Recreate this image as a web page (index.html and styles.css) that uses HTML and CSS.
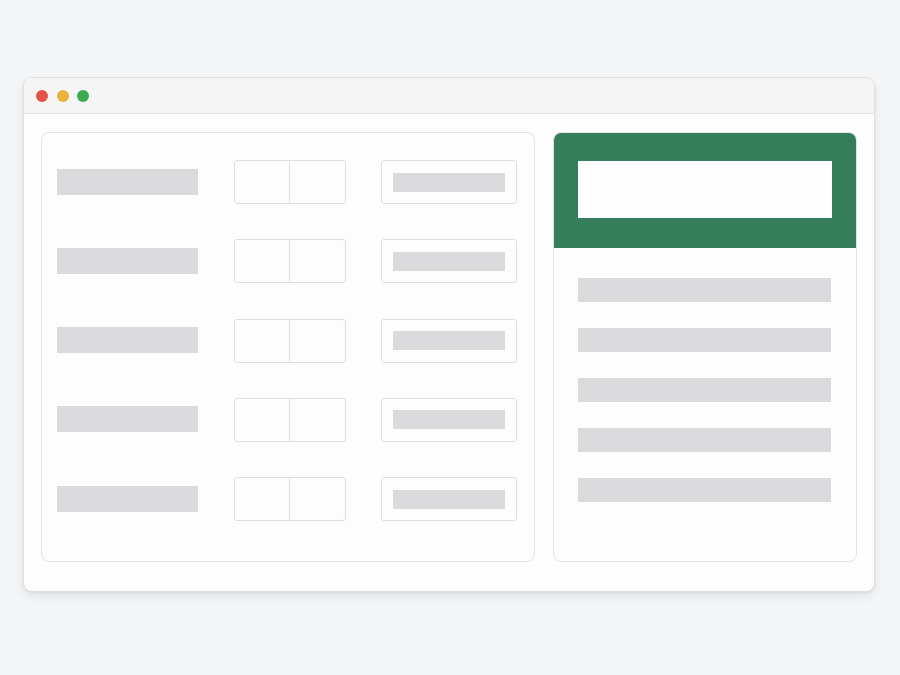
FILE: index.html
```html
<!DOCTYPE html>
<html lang="en">
<head>
<meta charset="utf-8">
<title>Form layout</title>
<link rel="stylesheet" href="styles.css">
</head>
<body>
<div class="window">
  <div class="titlebar">
    <span class="dot red"></span>
    <span class="dot yellow"></span>
    <span class="dot green"></span>
  </div>
  <div class="content">
    <section class="form-panel">
      <div class="row">
        <div class="label"></div>
        <div class="split"><span></span><span></span></div>
        <div class="field"><div class="field-bar"></div></div>
      </div>
      <div class="row">
        <div class="label"></div>
        <div class="split"><span></span><span></span></div>
        <div class="field"><div class="field-bar"></div></div>
      </div>
      <div class="row">
        <div class="label"></div>
        <div class="split"><span></span><span></span></div>
        <div class="field"><div class="field-bar"></div></div>
      </div>
      <div class="row">
        <div class="label"></div>
        <div class="split"><span></span><span></span></div>
        <div class="field"><div class="field-bar"></div></div>
      </div>
      <div class="row">
        <div class="label"></div>
        <div class="split"><span></span><span></span></div>
        <div class="field"><div class="field-bar"></div></div>
      </div>
    </section>
    <aside class="side-panel">
      <div class="side-header"><div class="side-title"></div></div>
      <div class="side-list">
        <div class="line"></div>
        <div class="line"></div>
        <div class="line"></div>
        <div class="line"></div>
        <div class="line"></div>
      </div>
    </aside>
  </div>
</div>
</body>
</html>
```
FILE: styles.css
```css
* { box-sizing: border-box; }

html, body {
  margin: 0;
  height: 100%;
}

body {
  background: #f4f5f7;
  padding: 77px 25px 0 23px;
  font-family: "Liberation Sans", Arial, sans-serif;
}

.window {
  width: 852px;
  height: 515px;
  background: #fdfdfd;
  border: 1px solid #dedfe1;
  border-radius: 9px;
  box-shadow: 0 5px 10px rgba(0, 0, 0, 0.07), 0 1px 3px rgba(0, 0, 0, 0.05);
  overflow: hidden;
  display: flex;
  flex-direction: column;
}

.titlebar {
  height: 36px;
  flex: none;
  background: #f5f5f6;
  border-bottom: 1px solid #e3e3e5;
  display: flex;
  align-items: center;
  gap: 8.5px;
  padding-left: 12px;
}

.dot {
  width: 12px;
  height: 12px;
  border-radius: 50%;
}
.dot.red { background: #e5534b; }
.dot.yellow { background: #eab13c; }
.dot.green { background: #3cab4f; }

.content {
  flex: 1;
  display: flex;
  gap: 18px;
  padding: 18px 17px 29px 17px;
}

.form-panel {
  width: 494px;
  border: 1px solid #e1e1e3;
  border-radius: 8px;
  background: #fdfdfd;
  padding: 27px 17px 0 15px;
  display: flex;
  flex-direction: column;
  gap: 35.3px;
}

.row {
  display: grid;
  grid-template-columns: 141px 112px 136px;
  column-gap: 36px;
  align-items: center;
  height: 44px;
}

.label {
  height: 26px;
  margin-top: -1px;
  background: #dadadc;
}

.split {
  height: 44px;
  border: 1px solid #dfdfe1;
  border-radius: 3px;
  display: grid;
  grid-template-columns: 1fr 1fr;
}
.split span:first-child {
  border-right: 1px solid #dfdfe1;
}

.field {
  width: 136px;
  height: 44px;
  margin-left: -1px;
  border: 1px solid #dfdfe1;
  border-radius: 3px;
  padding: 0 11px;
  display: flex;
  align-items: center;
}

.field-bar {
  flex: 1;
  height: 19px;
  background: #dadadc;
}

.side-panel {
  width: 304px;
  border: 1px solid #e1e1e3;
  border-radius: 8px;
  background: #fdfdfd;
  overflow: hidden;
}

.side-header {
  height: 116px;
  margin: -1px -1px 0 -1px;
  background: #367e5b;
  padding: 29px 25px 0 25px;
}

.side-title {
  height: 57px;
  background: #fefefe;
}

.side-list {
  padding: 30px 25px 0 24px;
  display: flex;
  flex-direction: column;
  gap: 26px;
}

.line {
  height: 24px;
  background: #dadadc;
}
```
